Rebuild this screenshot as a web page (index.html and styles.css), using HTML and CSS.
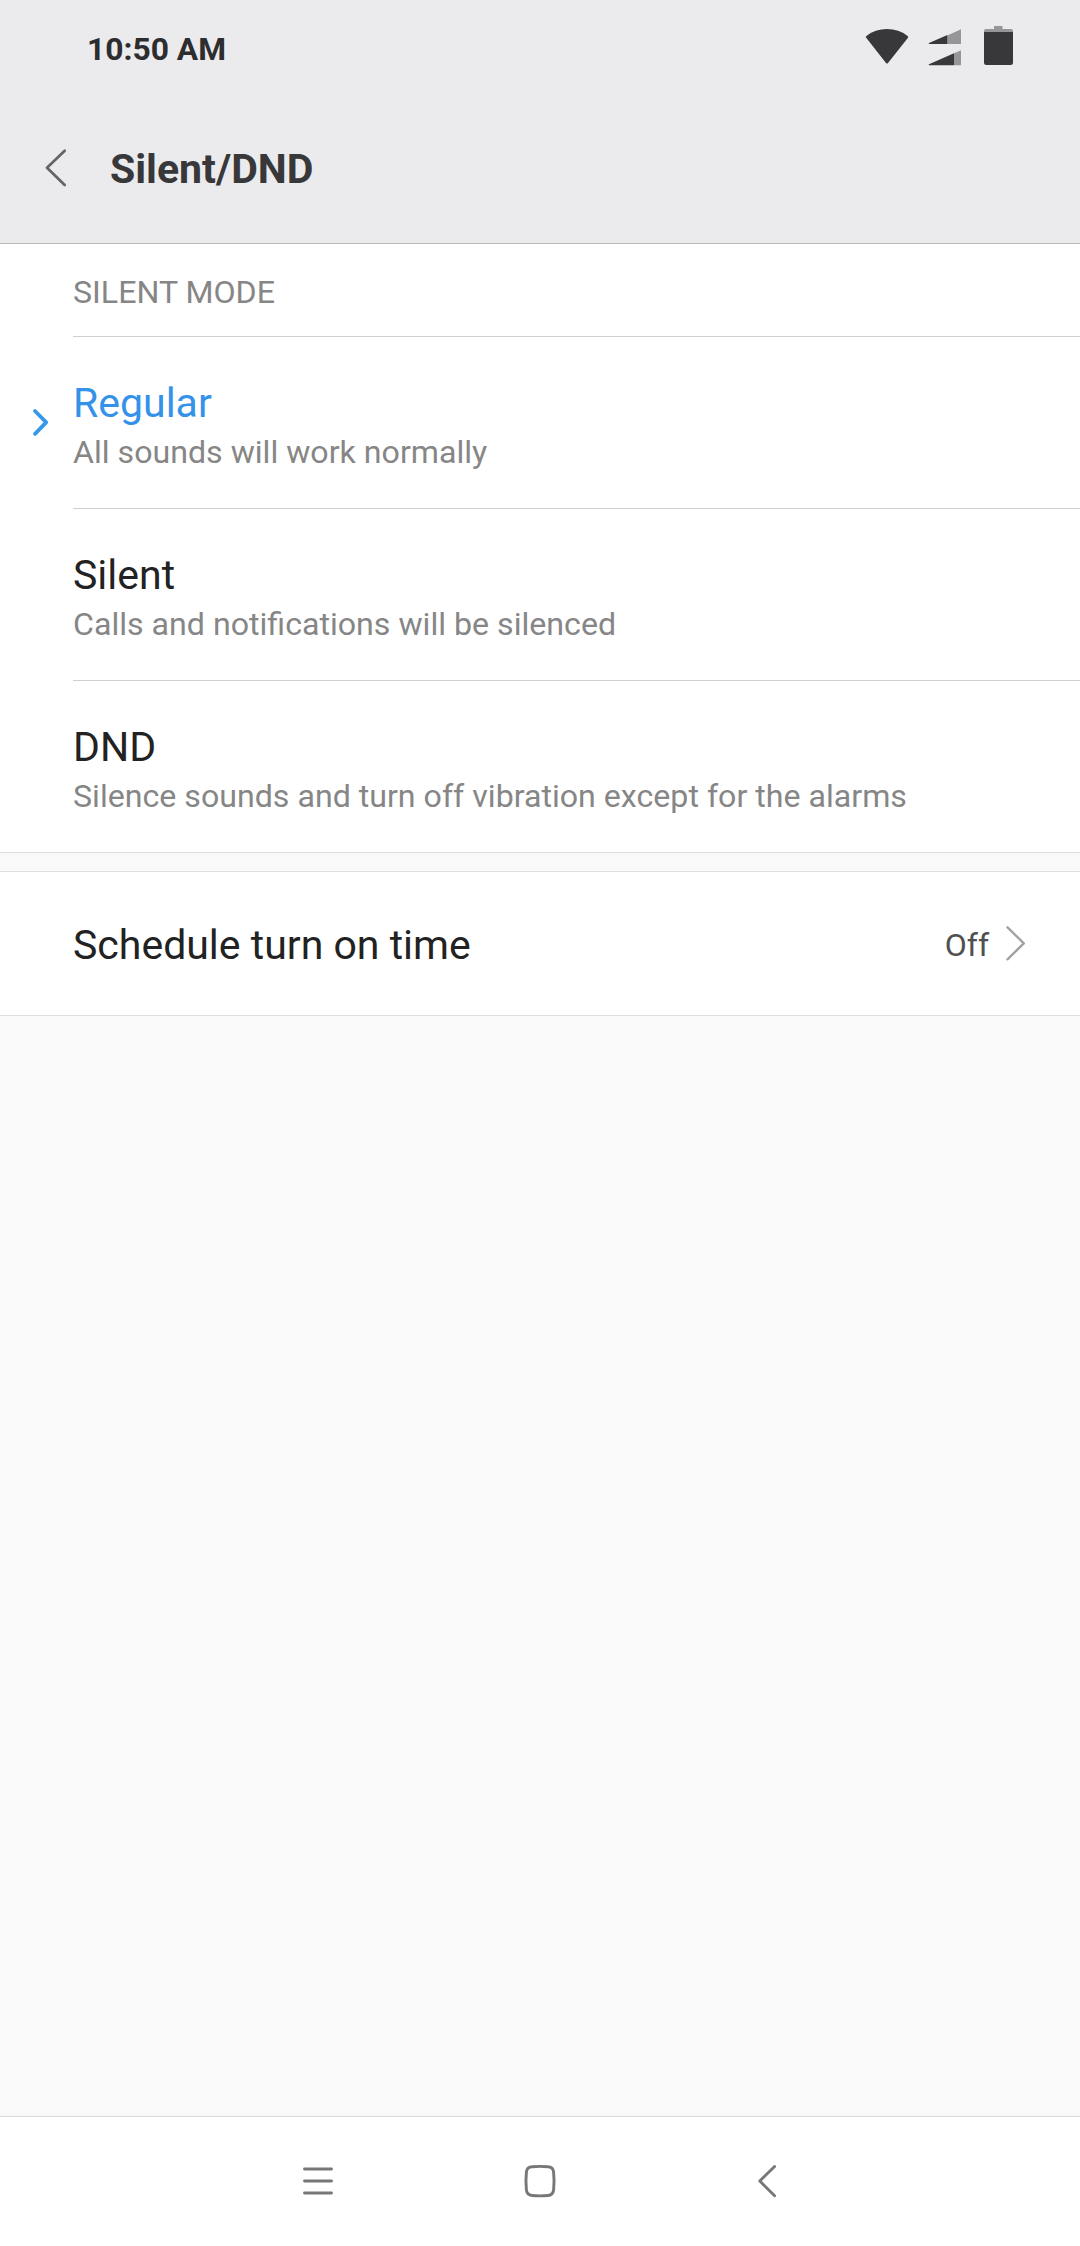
FILE: index.html
```html
<!DOCTYPE html>
<html lang="en">
<head>
<meta charset="utf-8">
<title>Silent/DND</title>
<link rel="stylesheet" href="styles.css">
</head>
<body>
<div class="screen">
  <header class="top">
    <div class="status">
      <span class="time">10:50 AM</span>
      <div class="status-icons">
        <svg class="wifi" width="44" height="36" viewBox="0 0 44 36"><path d="M1.2 8.8Q.2 7.8 1.4 6.9Q10 0 22 0T42.600 6.900Q43.800 7.800 42.800 8.900L23 34Q22 35.200 21 34Z"/></svg>
        <svg class="signal" width="33" height="36" viewBox="0 0 33 36"><path class="dim" d="M19.400 5.500 33 -.700V14H19.400ZM26 23.300 33 20.300V35.300H26Z"/><path d="M1 13.100 19.400 4.900V14H1.300Q0 13.700 1 13.100ZM1 34.200 26 23.300V35.300H1.300Q0 34.900 1 34.200Z"/></svg>
        <svg class="battery" width="29" height="39" viewBox="0 0 29 39"><path class="dim" d="M10 0h8.500v3H27Q29 3 29 5v3H0V5Q0 3 2 3h8Z"/><path d="M0 6h29v30.500Q29 39 26.500 39h-24Q0 39 0 36.500Z"/></svg>
      </div>
    </div>
    <div class="title-bar">
      <svg class="back" width="22" height="38" viewBox="0 0 22 38"><path d="M19.700 1.700 2 18.800 19.700 36"/></svg>
      <h1 class="title">Silent/DND</h1>
    </div>
  </header>
  <main class="content">
    <section class="group">
      <h2 class="section-title">SILENT MODE</h2>
      <div class="option selected">
        <svg class="mark" width="16" height="27" viewBox="0 0 16 27"><path d="M2 2 13.200 13.400 2 24.800"/></svg>
        <div class="name">Regular</div>
        <div class="note">All sounds will work normally</div>
      </div>
      <div class="option">
        <div class="name">Silent</div>
        <div class="note">Calls and notifications will be silenced</div>
      </div>
      <div class="option">
        <div class="name">DND</div>
        <div class="note">Silence sounds and turn off vibration except for the alarms</div>
      </div>
    </section>
    <section class="schedule">
      <span class="name">Schedule turn on time</span>
      <span class="value">Off</span>
      <svg class="arrow" width="20" height="35" viewBox="0 0 20 35"><path d="M1.500 1.300 17.800 17.300 1.500 33.300"/></svg>
    </section>
  </main>
  <nav class="nav">
    <svg width="32" height="34" viewBox="0 0 32 34"><path d="M2.500 5h27M2.500 17h27M2.500 29h27"/></svg>
    <svg width="34" height="34" viewBox="0 0 34 34"><path d="M9 2.700Q17 2 25 2.700Q30 3 30.600 8Q31.500 17 30.600 26Q30 31 25 31.500Q17 32.300 9 31.500Q4 31 3.400 26Q2.500 17 3.400 8Q4 3 9 2.700Z"/></svg>
    <svg width="20" height="34" viewBox="0 0 20 34"><path d="M17.600 2.500 2.800 17 17.600 31.700"/></svg>
  </nav>
</div>
</body>
</html>
```

FILE: styles.css
```css
* { box-sizing: border-box; }
body { margin: 0; font-family: Roboto, "Liberation Sans", sans-serif; }
svg { display: block; flex: none; overflow: visible; }
.screen { height: 2246px; display: flex; flex-direction: column; background: #f9f9f9; }

.top { height: 244px; flex: none; background: #ebebed; border-bottom: 1px solid #b9b9bb; }
.status { height: 98px; padding: 26px 67px 0 87px; display: flex; justify-content: space-between; align-items: flex-start; }
.time { padding-top: 4px; font-size: 31.800px; line-height: 38px; font-weight: 700; color: #2d2d2f; }
.status-icons { display: flex; align-items: flex-start; fill: #38383a; }
.status-icons .dim { fill: #969698; }
.wifi { margin: 3px 19px 0 0; }
.signal { margin: 4px 23px 0 0; }

.title-bar { height: 145px; padding: 46px 46px 0 45px; display: flex; align-items: flex-start; }
.back { margin: 5px 43px 0 0; fill: none; stroke: #646466; stroke-width: 2.700; stroke-linecap: round; stroke-linejoin: round; }
.title { margin: 0; font-size: 41px; line-height: 50px; font-weight: 700; color: #38383a; }

.content { flex: 1; }
.group { background: #fff; border-bottom: 1px solid #dedede; }
.section-title { height: 93px; margin: 0 0 0 73px; padding-top: 29px; font-size: 32.150px; line-height: 38px; font-weight: 400; color: #868686; border-bottom: 1px solid #d0d0d0; }
.option { position: relative; height: 172px; margin-left: 73px; padding-top: 41px; border-bottom: 1px solid #d0d0d0; }
.option:last-child { height: 171px; border-bottom: 0; }
.name { font-size: 41px; line-height: 50px; color: #222; }
.selected .name { color: #3592e9; }
.note { margin-top: 5px; font-size: 32.150px; line-height: 38px; color: #868686; }
.mark { position: absolute; left: -40px; top: 72px; fill: none; stroke: #3698e8; stroke-width: 3.800; stroke-linecap: round; stroke-linejoin: round; }

.schedule { height: 145px; margin-top: 18px; padding: 0 54px 0 73px; display: flex; align-items: center; background: #fff; border: solid #dedede; border-width: 1px 0; }
.schedule .name { flex: 1; padding-top: 3px; }
.value { padding-top: 2px; margin-right: 17px; font-size: 32px; line-height: 38px; color: #505050; }
.arrow { fill: none; stroke: #a2a2a2; stroke-width: 2.400; stroke-linecap: round; stroke-linejoin: round; }

.nav { height: 130px; flex: none; padding: 47px 303px 0 302px; display: grid; grid-template-columns: 221px 1fr auto; background: #fff; border-top: 1px solid #dcdcdc; fill: none; stroke: #777; stroke-width: 2.900; stroke-linecap: round; stroke-linejoin: round; }
```
